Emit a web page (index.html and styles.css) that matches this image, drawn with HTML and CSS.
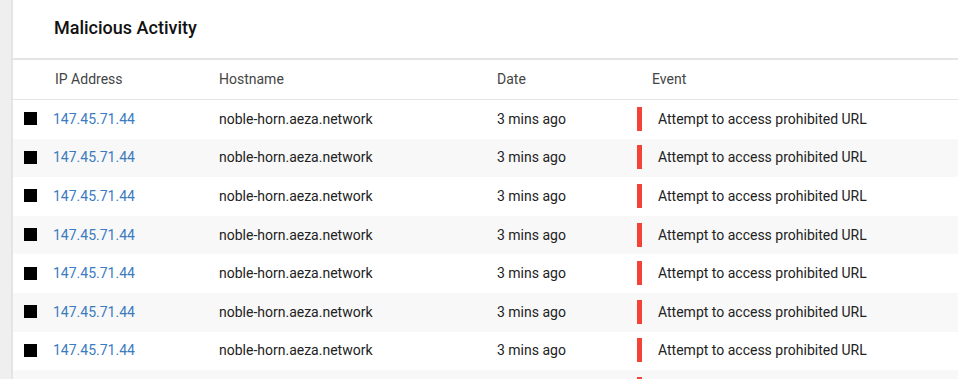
FILE: index.html
```html
<!DOCTYPE html>
<html lang="en">

<head>
    <meta charset="UTF-8" />
    <meta name="viewport" content="width=device-width, initial-scale=1.0" />
    <link rel="stylesheet" href="styles.css">
    <title>Malicious Activity</title>
</head>

<body>
    <div class="page">
        <aside class="rail"></aside>

        <section class="card">
            <h2 class="card-title">Malicious Activity</h2>

            <div class="table">
                <div class="row head">
                    <span></span>
                    <span class="ip-head">IP Address</span>
                    <span>Hostname</span>
                    <span>Date</span>
                    <span class="event-head">Event</span>
                </div>

                <div class="row">
                    <span><i class="flag"></i></span>
                    <a href="#" class="ip">147.45.71.44</a>
                    <span>noble-horn.aeza.network</span>
                    <span>3 mins ago</span>
                    <span class="event"><i class="bar"></i>Attempt to access prohibited URL</span>
                </div>
                <div class="row">
                    <span><i class="flag"></i></span>
                    <a href="#" class="ip">147.45.71.44</a>
                    <span>noble-horn.aeza.network</span>
                    <span>3 mins ago</span>
                    <span class="event"><i class="bar"></i>Attempt to access prohibited URL</span>
                </div>
                <div class="row">
                    <span><i class="flag"></i></span>
                    <a href="#" class="ip">147.45.71.44</a>
                    <span>noble-horn.aeza.network</span>
                    <span>3 mins ago</span>
                    <span class="event"><i class="bar"></i>Attempt to access prohibited URL</span>
                </div>
                <div class="row">
                    <span><i class="flag"></i></span>
                    <a href="#" class="ip">147.45.71.44</a>
                    <span>noble-horn.aeza.network</span>
                    <span>3 mins ago</span>
                    <span class="event"><i class="bar"></i>Attempt to access prohibited URL</span>
                </div>
                <div class="row">
                    <span><i class="flag"></i></span>
                    <a href="#" class="ip">147.45.71.44</a>
                    <span>noble-horn.aeza.network</span>
                    <span>3 mins ago</span>
                    <span class="event"><i class="bar"></i>Attempt to access prohibited URL</span>
                </div>
                <div class="row">
                    <span><i class="flag"></i></span>
                    <a href="#" class="ip">147.45.71.44</a>
                    <span>noble-horn.aeza.network</span>
                    <span>3 mins ago</span>
                    <span class="event"><i class="bar"></i>Attempt to access prohibited URL</span>
                </div>
                <div class="row">
                    <span><i class="flag"></i></span>
                    <a href="#" class="ip">147.45.71.44</a>
                    <span>noble-horn.aeza.network</span>
                    <span>3 mins ago</span>
                    <span class="event"><i class="bar"></i>Attempt to access prohibited URL</span>
                </div>
                <div class="row">
                    <span><i class="flag"></i></span>
                    <a href="#" class="ip">147.45.71.44</a>
                    <span>noble-horn.aeza.network</span>
                    <span>3 mins ago</span>
                    <span class="event"><i class="bar"></i>Attempt to access prohibited URL</span>
                </div>
            </div>
        </section>
    </div>
</body>

</html>
```

FILE: styles.css
```css
* {
    margin: 0;
    padding: 0;
    box-sizing: border-box;
    font-family: 'Roboto', sans-serif;
}

body {
    background: #fff;
    overflow: hidden;
}

.page {
    display: flex;
    min-height: 100vh;
}

.rail {
    width: 13px;
    flex-shrink: 0;
    background: #efefef;
    border-right: 2px solid #e4e4e4;
}

.card {
    flex: 1;
}

.card-title {
    height: 60px;
    padding: 17px 0 0 41px;
    font-size: 18px;
    font-weight: 500;
    color: #111;
    border-bottom: 2px solid #e4e4e4;
}

.row {
    display: grid;
    grid-template-columns: 40px 166px 278px 140px 1fr;
    align-items: center;
    height: 38.6px;
    padding-bottom: 1px;
    font-size: 14px;
    color: #222;
}

.row:nth-child(odd) {
    background: #f8f8f8;
}

.row.head {
    height: 40px;
    background: #fff;
    color: #444;
    border-bottom: 1px solid #e4e4e4;
}

.ip-head {
    padding-left: 2px;
}

.event-head {
    padding-left: 15px;
}

.flag {
    display: block;
    width: 13px;
    height: 13px;
    margin-left: 11px;
    background: #000;
}

.ip {
    color: #3b7bbf;
    text-decoration: none;
}

.event {
    display: flex;
    align-items: center;
}

.bar {
    width: 5px;
    height: 24px;
    margin-right: 16px;
    background: #f44336;
}
```
